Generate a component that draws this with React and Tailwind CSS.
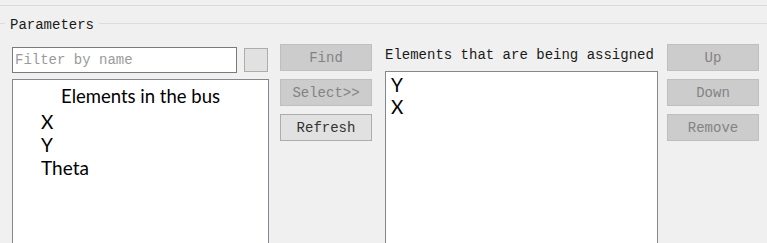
const mono = "font-['Liberation_Mono',monospace] text-[14px]";
const sans = "font-['Lato',sans-serif] text-[19px]";

const Btn = ({ children, disabled }) => (
  <button
    type="button"
    className={`h-[27px] w-[92px] border ${mono} leading-none ${
      disabled ? "border-[#bfbfbf] bg-[#cccccc] text-[#838383]" : "border-[#adadad] bg-[#e1e1e1] text-[#333333]"
    }`}
  >
    {children}
  </button>
);

export default function App() {
  return (
    <div className="h-[243px] w-[767px] overflow-hidden bg-[#f0f0f0]">
      <div className="h-[5px]" />
      <div className="border-t border-[#dadada]" />
      <div className="flex h-[35px] items-center">
        <div className="h-px w-[5px] bg-[#dcdcdc]" />
        <span className={`px-[5px] pt-[3px] ${mono} text-[#1a1a1a]`}>Parameters</span>
        <div className="h-px flex-1 bg-[#dcdcdc]" />
      </div>

      <div className="flex items-start pl-[12px] pt-[3px]">
        {/* left column */}
        <div className="flex w-[257px] flex-col">
          <div className="flex h-[35px] items-start">
            <input
              placeholder="Filter by name"
              className={`mt-[3px] h-[26px] w-[225px] border border-[#7a7a7a] bg-white px-[2px] ${mono} outline-none placeholder:text-[#9a9a9a]`}
            />
            <div className="ml-[7px] mt-[4px] h-[24px] w-[24px] border border-[#adadad] bg-[#e1e1e1]" />
          </div>
          <div className="h-[170px] border border-[#828790] bg-white">
            <div className="pt-[5px] text-center font-['Lato',sans-serif] text-[18.5px] leading-[22px] text-black">Elements in the bus</div>
            <div className={`${sans} mt-[3px] pl-[28px] leading-[23px] text-black`}>
              <div>X</div>
              <div>Y</div>
              <div>Theta</div>
            </div>
          </div>
        </div>

        {/* middle buttons */}
        <div className="ml-[11px] flex flex-col gap-[8px]">
          <Btn disabled>Find</Btn>
          <Btn disabled>Select&gt;&gt;</Btn>
          <Btn>Refresh</Btn>
        </div>

        {/* right list */}
        <div className="ml-[13px] flex w-[273px] flex-col">
          <div className={`h-[27px] pt-[1px] ${mono} leading-[20px] text-[#1a1a1a]`}>Elements that are being assigned</div>
          <div className="h-[180px] border border-[#828790] bg-white px-[5px] pt-[2px]">
            <div className={`${sans} leading-[22px] text-black`}>
              <div>Y</div>
              <div>X</div>
            </div>
          </div>
        </div>

        {/* right buttons */}
        <div className="ml-[9px] flex flex-col gap-[8px]">
          <Btn disabled>Up</Btn>
          <Btn disabled>Down</Btn>
          <Btn disabled>Remove</Btn>
        </div>
      </div>
    </div>
  );
}
